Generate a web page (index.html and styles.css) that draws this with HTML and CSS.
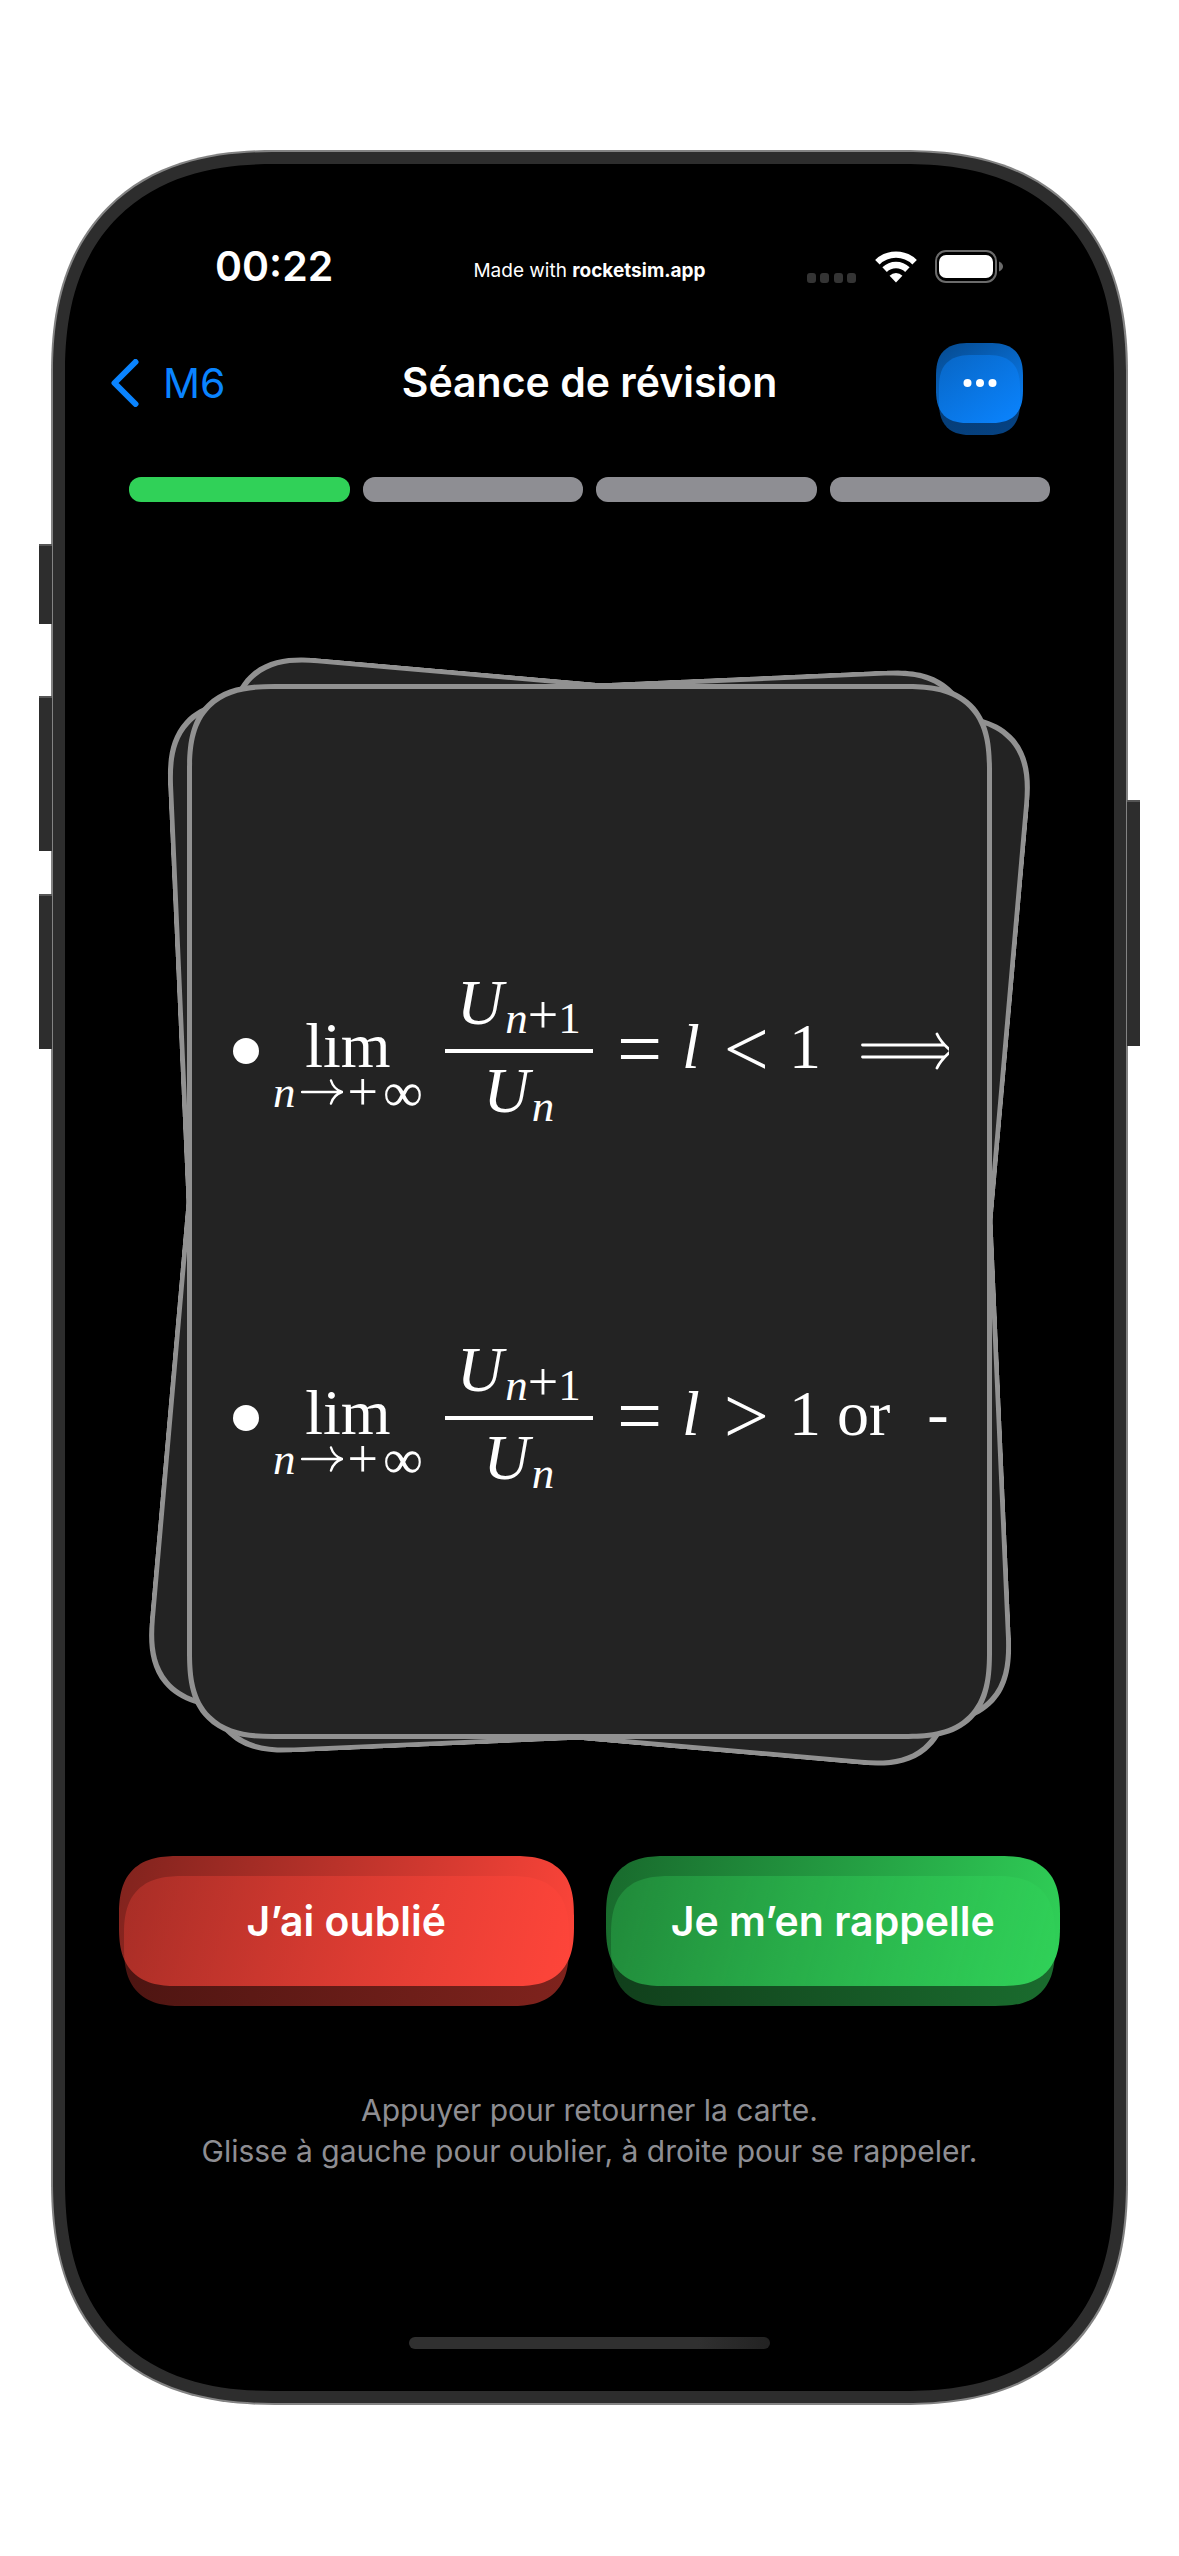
FILE: index.html
```html
<!DOCTYPE html>
<html lang="fr">
<head>
<meta charset="utf-8">
<meta name="viewport" content="width=device-width, initial-scale=1">
<title>Séance de révision</title>
<link rel="stylesheet" href="styles.css">
</head>
<body>
<div class="stage">
  <div class="phone">
    <span class="key key-action"></span>
    <span class="key key-up"></span>
    <span class="key key-down"></span>
    <span class="key key-power"></span>
    <div class="screen">
      <div class="status">
        <time class="clock">00:22</time>
        <span class="credit">Made with <b>rocketsim.app</b></span>
        <div class="indicators">
          <svg class="signal" viewBox="0 0 50 10" aria-hidden="true"><g fill="#343434"><rect x="0" y="0" width="9" height="10" rx="3"/><rect x="13" y="0" width="9" height="10" rx="3"/><rect x="27" y="0" width="9" height="10" rx="3"/><rect x="40" y="0" width="9" height="10" rx="3"/></g></svg>
          <svg class="wifi" viewBox="0 0 42 32" aria-hidden="true"><g fill="none" stroke="#fff" stroke-width="6.4"><path d="M2.4 11.2a26.5 26.5 0 0 1 37.2 0"/><path d="M9.6 18.6a16.3 16.3 0 0 1 22.8 0"/></g><path fill="#fff" d="M21 31.5l-6.400-6.800a9.200 9.200 0 0 1 12.800 0z"/></svg>
          <svg class="battery" viewBox="0 0 69 33" aria-hidden="true"><rect x="1" y="1" width="60" height="31" rx="10" fill="none" stroke="#6b6b6b" stroke-width="2"/><rect x="4" y="5" width="54" height="23" rx="7" fill="#fff"/><path d="M64 11.500q4 2 4 5t-4 5z" fill="#6b6b6b"/></svg>
        </div>
      </div>

      <header class="nav">
        <a class="back" href="#m6"><svg class="chevron" viewBox="0 0 28 48" aria-hidden="true"><path d="M24.500 3L3.500 24l21 21" fill="none" stroke="#0a84ff" stroke-width="6" stroke-linecap="round" stroke-linejoin="round"/></svg>M6</a>
        <h1 class="title">Séance de révision</h1>
        <button class="raised raised-blue" type="button" aria-label="Options"><svg class="dots" viewBox="0 0 34 10" aria-hidden="true"><g fill="#fff"><circle cx="4.500" cy="5" r="4"/><circle cx="17" cy="5" r="4"/><circle cx="29.500" cy="5" r="4"/></g></svg></button>
      </header>

      <div class="progress" role="img" aria-label="Carte 1 sur 4">
        <span class="step step-done"></span><span class="step"></span><span class="step"></span><span class="step"></span>
      </div>

      <main class="deck">
        <div class="card card-back tilt-right"></div>
        <div class="card card-back tilt-left"></div>
        <div class="card card-front">
          <div class="formula">
            <span class="bullet"></span>
            <span class="limit"><span class="limit-name">lim</span><span class="limit-range"><i>n</i><svg class="arrow" viewBox="0 0 42 26" aria-label="→"><path d="M1 13h39M30 1.500q2.500 8.500 11 11.500q-8.500 3-11 11.500" fill="none" stroke="#fff" stroke-width="2.400" stroke-linecap="round"/></svg><span class="plus">+</span><span class="infinity">∞</span></span></span>
            <span class="fraction"><span class="numerator"><i>U</i><sub><i>n</i><span class="plus">+</span>1</sub></span><span class="denominator"><i>U</i><sub><i>n</i></sub></span></span>
            <span class="relation">=</span>
            <span class="term"><i>l</i></span>
            <span class="relation">&lt;</span>
            <span class="term">1</span>
            <svg class="implies" viewBox="0 0 88 38" aria-label="⟹"><path d="M1.500 13H83M1.500 25H83M76 2q3.500 8 14 17q-10.500 9-14 17" fill="none" stroke="#fff" stroke-width="2.800" stroke-linecap="round"/></svg>
          </div>
          <div class="formula">
            <span class="bullet"></span>
            <span class="limit"><span class="limit-name">lim</span><span class="limit-range"><i>n</i><svg class="arrow" viewBox="0 0 42 26" aria-label="→"><path d="M1 13h39M30 1.500q2.500 8.500 11 11.500q-8.500 3-11 11.500" fill="none" stroke="#fff" stroke-width="2.400" stroke-linecap="round"/></svg><span class="plus">+</span><span class="infinity">∞</span></span></span>
            <span class="fraction"><span class="numerator"><i>U</i><sub><i>n</i><span class="plus">+</span>1</sub></span><span class="denominator"><i>U</i><sub><i>n</i></sub></span></span>
            <span class="relation">=</span>
            <span class="term"><i>l</i></span>
            <span class="relation">&gt;</span>
            <span class="term">1 or</span>
            <span class="term term-cut">-</span>
          </div>
        </div>
      </main>

      <div class="answers">
        <button class="raised raised-red" type="button">J’ai oublié</button>
        <button class="raised raised-green" type="button">Je m’en rappelle</button>
      </div>

      <p class="hint">Appuyer pour retourner la carte.<br>Glisse à gauche pour oublier, à droite pour se rappeler.</p>
      <div class="home"></div>
    </div>
  </div>
</div>
</body>
</html>
```

FILE: styles.css
```css
* { box-sizing: border-box; }

body {
  margin: 0;
  background: #fff;
  font-family: Inter, "Liberation Sans", sans-serif;
  color: #fff;
}

.stage { padding: 150px 51px; }

/* Device frame */
.phone {
  position: relative;
  border-radius: 192px;
  border: 2px solid #838383;
  background: #2d2d2d;
  padding: 12px;
}

.screen {
  display: flex;
  flex-direction: column;
  border-radius: 178px;
  background: #000;
  padding: 70px 0 42px;
}

.key {
  position: absolute;
  width: 13px;
  background: #2d2d2d;
  border-top: 2px solid #555;
}
.key-action { left: -14px; top: 392px; height: 80px; }
.key-up { left: -14px; top: 544px; height: 155px; }
.key-down { left: -14px; top: 742px; height: 155px; }
.key-power { right: -14px; top: 648px; height: 246px; }

/* Status bar */
.status {
  display: grid;
  grid-template-columns: 1fr auto 1fr;
  align-items: center;
  height: 64px;
  padding: 0 110px;
}
.clock { padding-left: 40px; font-size: 41px; font-weight: 600; }
.credit { font-size: 19px; padding-top: 8px; }
.credit b { font-weight: 700; }
.indicators { display: flex; justify-content: flex-end; align-items: flex-end; gap: 18px; }
.signal { width: 50px; height: 10px; }
.wifi { width: 42px; height: 32px; }
.battery { width: 69px; height: 33px; }

/* Navigation bar */
.nav {
  display: grid;
  grid-template-columns: 1fr auto 1fr;
  align-items: center;
  height: 80px;
  margin-top: 45px;
  padding: 0 46px;
}
.back {
  display: flex;
  align-items: center;
  gap: 24px;
  font-size: 41px;
  color: #0a84ff;
  text-decoration: none;
}
.chevron { width: 28px; height: 48px; }
.title { margin: 0; padding-bottom: 2px; font-size: 41px; font-weight: 600; }

/* Raised buttons: a dim base below, seen through the translucent end of the face */
.raised {
  position: relative;
  z-index: 0;
  border: 0;
  padding: 0;
  border-radius: 52px;
  font: 600 41px Inter, "Liberation Sans", sans-serif;
  color: #fff;
  background: none;
  height: 130px;
  --depth: 20px;
  --inset: 5px;
}
.raised::before,
.raised::after {
  content: "";
  position: absolute;
  border-radius: inherit;
  z-index: -1;
}
.raised::before {
  inset: var(--depth) var(--inset) calc(0px - var(--depth));
  background: linear-gradient(var(--angle), var(--base-from), var(--base-to));
}
.raised::after {
  inset: 0;
  background: linear-gradient(var(--angle), var(--from), var(--to));
}
.raised-blue {
  --depth: 12px;
  --inset: 3px;
  --angle: 145deg;
  --base-from: #053a70;
  --base-to: #064282;
  --from: rgba(10, 132, 255, 0.55);
  --to: #0a84ff;
  justify-self: end;
  display: grid;
  place-items: center;
  width: 87px;
  height: 80px;
  margin-right: 45px;
  border-radius: 28px;
}
.raised-red {
  --angle: 105deg;
  --base-from: #4a1411;
  --base-to: #80231d;
  --from: rgba(255, 69, 58, 0.5);
  --to: #ff453a;
}
.raised-green {
  --angle: 105deg;
  --base-from: #103c1a;
  --base-to: #1a6c2e;
  --from: rgba(48, 209, 88, 0.5);
  --to: #30d158;
}
.dots { width: 34px; height: 10px; }

/* Progress */
.progress {
  display: grid;
  grid-template-columns: repeat(4, 1fr);
  gap: 13px;
  margin-top: 54px;
  padding: 0 64px;
}
.step { height: 25px; border-radius: 12px; background: #8e8e93; }
.step-done { background: #30d158; }

/* Card deck */
.deck {
  display: grid;
  margin: 182px 122px 0;
}
.card {
  grid-area: 1 / 1;
  min-width: 0;
  border: 5px solid #919191;
  border-radius: 70px;
  background: #232323;
}
.tilt-right { transform: rotate(5deg); }
.tilt-left { transform: rotate(-2.5deg); }
.card-front {
  position: relative;
  display: flex;
  flex-direction: column;
  gap: 193px;
  padding: 275px 38px 229px;
}

/* Formulas */
.formula {
  display: flex;
  align-items: center;
  height: 174px;
  padding-left: 3px;
  overflow: hidden;
  white-space: nowrap;
  font-family: "Liberation Serif", serif;
  font-size: 64px;
}
.formula > * { flex: none; }
.bullet { width: 26px; height: 26px; border-radius: 50%; background: #fff; }
.limit {
  display: flex;
  flex-direction: column;
  align-items: center;
  margin-left: 14px;
  padding-top: 26px;
}
.limit-name { line-height: 56px; }
.limit-range {
  display: flex;
  align-items: center;
  gap: 5px;
  font-size: 45px;
  line-height: 36px;
}
.plus { font-size: 54px; }
.infinity { font-size: 56px; }
.arrow { width: 42px; height: 26px; }
.fraction {
  display: flex;
  flex-direction: column;
  align-items: stretch;
  text-align: center;
  min-width: 148px;
  margin-left: 22px;
}
.numerator { line-height: 64px; padding-bottom: 14px; }
.denominator { line-height: 64px; padding: 6px 0 8px; border-top: 4px solid #fff; }
.fraction sub { margin-left: 2px; font-size: 45px; line-height: 0; vertical-align: -9px; }
.relation { font-size: 80px; line-height: 64px; padding-bottom: 4px; margin: 0 20px 0 24px; }
.term { line-height: 64px; padding-bottom: 8px; }
.implies { width: 88px; height: 38px; margin-left: 40px; }
.term-cut { margin-left: 37px; }

/* Answers and hint */
.answers {
  display: grid;
  grid-template-columns: 1fr 1fr;
  gap: 32px;
  margin-top: 117px;
  padding: 0 54px;
}
.hint {
  margin: 104px 0 0;
  text-align: center;
  font-size: 30px;
  line-height: 41px;
  color: #8e8e93;
}
.home {
  align-self: center;
  width: 361px;
  height: 12px;
  margin-top: 165px;
  border-radius: 6px;
  background: linear-gradient(90deg, #303030 80%, #222);
}

/* Continuous corners where the browser can draw them */
@supports (corner-shape: squircle) {
  .phone { border-radius: 224px; corner-shape: superellipse(1.25); }
  .screen { border-radius: 210px; corner-shape: superellipse(1.25); }
  .card { border-radius: 88px; corner-shape: superellipse(1.45); }
  .raised, .raised::before, .raised::after { corner-shape: superellipse(1.4); }
  .raised { border-radius: 60px; }
  .raised-blue { border-radius: 34px; }
}
```
